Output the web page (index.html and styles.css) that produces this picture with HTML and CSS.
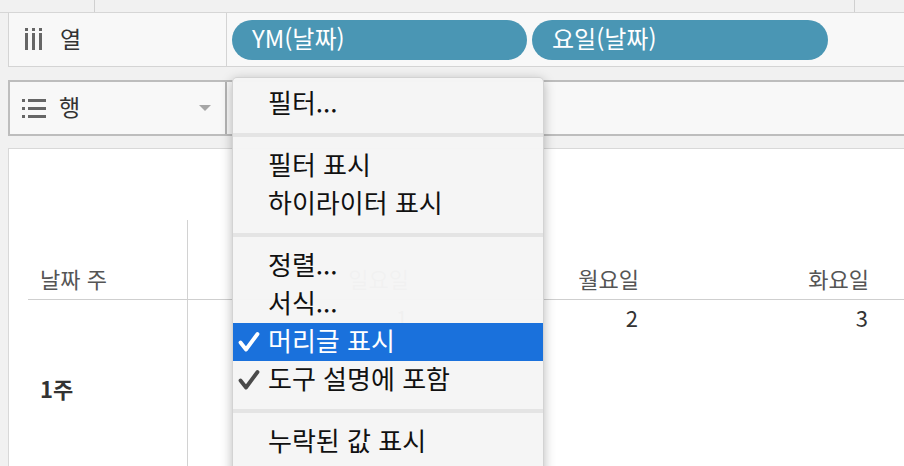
FILE: index.html
```html
<!DOCTYPE html>
<html lang="ko">
<head>
<meta charset="utf-8">
<link rel="stylesheet" href="styles.css">
</head>
<body>
<div class="topstrip">
  <div class="seg seg-a"></div>
  <div class="seg seg-b"></div>
  <div class="seg seg-c"></div>
</div>

<div class="shelf shelf-cols">
  <div class="shelf-label">
    <svg class="ico" width="24" height="24" viewBox="0 0 24 24">
      <rect x="2" y="0" width="3" height="3" fill="#666"/>
      <rect x="2" y="5" width="3" height="17" fill="#666"/>
      <rect x="9" y="0" width="3" height="3" fill="#666"/>
      <rect x="9" y="5" width="3" height="17" fill="#666"/>
      <rect x="16" y="0" width="3" height="3" fill="#666"/>
      <rect x="16" y="5" width="3" height="17" fill="#666"/>
    </svg>
    <span class="label-text">열</span>
  </div>
  <div class="pills">
    <div class="pill">YM(날짜)</div>
    <div class="pill pill-b">요일(날짜)</div>
  </div>
</div>

<div class="shelf shelf-rows">
  <div class="shelf-label">
    <svg class="ico" width="24" height="24" viewBox="0 0 24 24">
      <rect x="0" y="3" width="3" height="3" fill="#666"/>
      <rect x="6" y="3" width="18" height="3" fill="#666"/>
      <rect x="0" y="11" width="3" height="3" fill="#666"/>
      <rect x="6" y="11" width="18" height="3" fill="#666"/>
      <rect x="0" y="19" width="3" height="3" fill="#666"/>
      <rect x="6" y="19" width="18" height="3" fill="#666"/>
    </svg>
    <span class="label-text">행</span>
    <span class="caret"></span>
  </div>
  <div class="pills">
    <div class="pill pill-faded"></div>
  </div>
</div>

<div class="card">
  <div class="grid">
    <div class="cell head rowhead">날짜 주</div>
    <div class="cell head num">일요일</div>
    <div class="cell head num">월요일</div>
    <div class="cell head num">화요일</div>
    <div class="cell head fill"></div>

    <div class="cell rowhead body-label">1주</div>
    <div class="cell val">1</div>
    <div class="cell val">2</div>
    <div class="cell val">3</div>
    <div class="cell fill"></div>
  </div>
</div>

<div class="menu">
  <div class="item"><span class="chk"></span><span>필터...</span></div>
  <div class="sep"></div>
  <div class="item"><span class="chk"></span><span>필터 표시</span></div>
  <div class="item"><span class="chk"></span><span>하이라이터 표시</span></div>
  <div class="sep"></div>
  <div class="item"><span class="chk"></span><span>정렬...</span></div>
  <div class="item"><span class="chk"></span><span>서식...</span></div>
  <div class="item active"><span class="chk"><svg width="22" height="22" viewBox="0 0 22 22"><path d="M2.5 11.5 L8 18.5 L19.5 3" fill="none" stroke="#fff" stroke-width="3.8" stroke-linecap="round" stroke-linejoin="round"/></svg></span><span>머리글 표시</span></div>
  <div class="item"><span class="chk"><svg width="22" height="22" viewBox="0 0 22 22"><path d="M2.5 11.5 L8 18.5 L19.5 3" fill="none" stroke="#4a4a4a" stroke-width="3.8" stroke-linecap="round" stroke-linejoin="round"/></svg></span><span>도구 설명에 포함</span></div>
  <div class="sep"></div>
  <div class="item"><span class="chk"></span><span>누락된 값 표시</span></div>
</div>
</body>
</html>
```
FILE: styles.css
```css
* { box-sizing: border-box; }
html, body { margin: 0; padding: 0; }
body {
  width: 904px;
  height: 466px;
  overflow: hidden;
  background: #f1f1f1;
  font-family: "Noto Sans CJK KR", "Noto Sans", sans-serif;
  position: relative;
}

.topstrip {
  height: 13px;
  display: flex;
  border-bottom: 1px solid #d6d6d6;
}
.seg { height: 12px; }
.seg-a { width: 95px; border-right: 1px solid #d0d0d0; }
.seg-b { width: 760px; border-right: 1px solid #d0d0d0; }
.seg-c { flex: 1; }

.shelf {
  display: flex;
  margin-left: 8px;
  background: #f8f8f8;
}
.shelf-cols {
  height: 54px;
  border-left: 1px solid #d4d4d4;
  border-bottom: 1px solid #d4d4d4;
}
.shelf-rows {
  margin-top: 13px;
  height: 56px;
  border-top: 2px solid #bdbdbd;
  border-bottom: 2px solid #bdbdbd;
  border-left: 2px solid #bdbdbd;
}
.shelf-label {
  width: 218px;
  flex: none;
  display: flex;
  align-items: center;
  padding-left: 14px;
  border-right: 1px solid #d4d4d4;
}
.shelf-rows .shelf-label {
  width: 217px;
  padding-left: 12px;
  border-right: 2px solid #b4b4b4;
}
.ico { flex: none; }
.label-text {
  margin-left: 13px;
  font-size: 23px;
  color: #333;
  line-height: 1;
  padding-bottom: 3px;
}
.caret {
  margin-left: auto;
  margin-right: 14px;
  width: 0;
  height: 0;
  border-left: 6px solid transparent;
  border-right: 6px solid transparent;
  border-top: 6px solid #a6a6a6;
}

.pills {
  display: flex;
  align-items: center;
  gap: 5px;
  padding-left: 5px;
}
.pill {
  width: 295px;
  height: 40px;
  border-radius: 20px;
  background: #4a96b4;
  color: #fff;
  font-size: 24px;
  display: flex;
  align-items: center;
  padding: 0 0 3px 20px;
  line-height: 1;
}
.pill-b { width: 296px; }
.pill-faded { background: #e8eef2; height: 39px; }

.card {
  margin: 12px 0 0 8px;
  height: 330px;
  background: #fff;
  border-top: 1px solid #d8d8d8;
  border-left: 1px solid #d8d8d8;
  padding: 71px 0 0 19px;
}
.grid {
  display: grid;
  grid-template-columns: 160px 230px 230px 230px 1fr;
  grid-template-rows: 80px 180px;
}
.cell { font-size: 22px; line-height: 1; }
.head {
  border-bottom: 1px solid #cfcfcf;
  color: #555;
  display: flex;
  align-items: flex-end;
  padding-bottom: 10px;
}
.rowhead {
  border-right: 1px solid #d2d2d2;
  padding-left: 12px;
}
.num { justify-content: flex-end; padding-right: 9px; }
.val {
  color: #333;
  text-align: right;
  padding: 6px 10px 0 0;
}
.body-label {
  color: #333;
  font-weight: 700;
  display: flex;
  align-items: center;
  padding-bottom: 4px;
}

.menu {
  position: absolute;
  left: 232px;
  top: 77px;
  width: 312px;
  height: 400px;
  background: rgba(245, 245, 245, 0.975);
  border: 1px solid rgba(0, 0, 0, 0.14);
  border-radius: 5px 5px 0 0;
  box-shadow: 0 3px 12px rgba(0, 0, 0, 0.28);
  padding-top: 7px;
}
.item {
  height: 38px;
  display: flex;
  align-items: center;
  font-size: 26px;
  color: #111;
  line-height: 1;
  padding-bottom: 5px;
}
.chk {
  width: 35px;
  flex: none;
  display: flex;
  align-items: center;
  padding: 5px 0 0 5px;
}
.item.active {
  background: #1a71dc;
  color: #fff;
}
.sep {
  height: 4px;
  margin: 10px 0;
  background: #e4e4e4;
}
```
